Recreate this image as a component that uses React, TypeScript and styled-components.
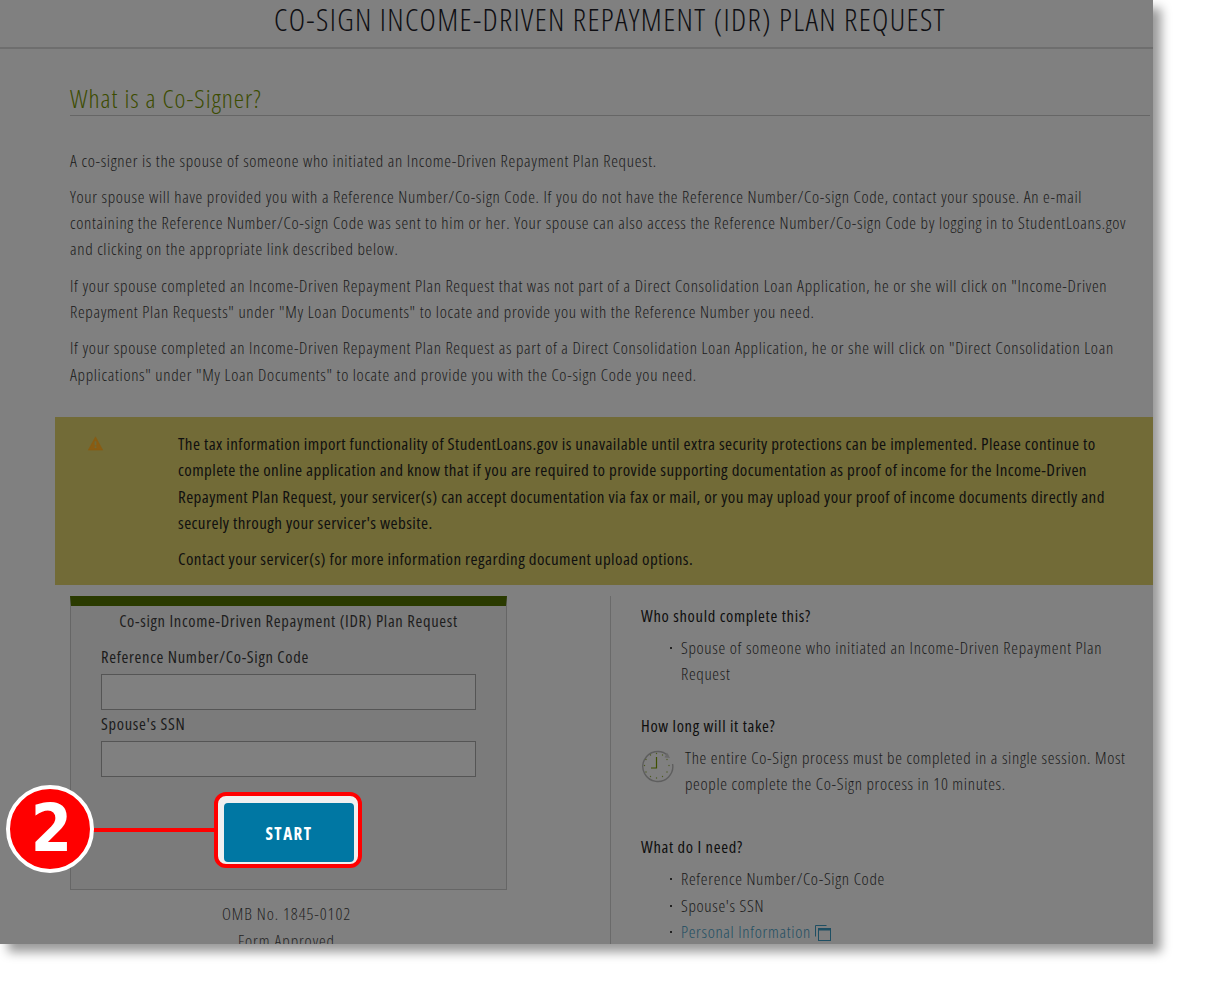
import { createGlobalStyle, styled } from 'styled-components';

const App = () => {
  return (
    <>
      <GlobalStyle />
      <ShotFrame>
        <PageInner>
          <PageHeader>CO-SIGN INCOME-DRIVEN REPAYMENT (IDR) PLAN REQUEST</PageHeader>
          <IntroSection>
            <SectionTitle>What is a Co-Signer?</SectionTitle>
            <IntroText>
              {introParagraphs.map((lines, idx) => (
                <Paragraph key={idx}>
                  {lines.map((line, i) => (
                    <Line key={i}>{line}</Line>
                  ))}
                </Paragraph>
              ))}
            </IntroText>
          </IntroSection>

          <WarningBanner>
            <WarningIcon viewBox="0 0 24 24" aria-hidden="true">
              <path d="M12 1.5 L23.5 22.5 H0.5 Z" fill="#8a5c12" stroke="#8a5c12" strokeWidth="1" strokeLinejoin="round" />
              <rect x="10.6" y="8.5" width="2.8" height="6.5" fill="#6e6a38" />
              <rect x="10.6" y="16.5" width="2.8" height="2.8" fill="#6e6a38" />
            </WarningIcon>
            <WarningText>
              <Paragraph>
                {warningLines.map((line, i) => (
                  <Line key={i}>{line}</Line>
                ))}
              </Paragraph>
              <Paragraph>Contact your servicer(s) for more information regarding document upload options.</Paragraph>
            </WarningText>
          </WarningBanner>

          <Columns>
            <LeftColumn>
              <FormCard>
                <FormTitle>Co-sign Income-Driven Repayment (IDR) Plan Request</FormTitle>
                <FieldLabel>Reference Number/Co-Sign Code</FieldLabel>
                <TextInput />
                <FieldLabel>Spouse's SSN</FieldLabel>
                <TextInput />
                <ButtonRow>
                  <ButtonHighlight>
                    <StartButton>START</StartButton>
                  </ButtonHighlight>
                </ButtonRow>
                <CalloutLine />
                <CalloutBadge>2</CalloutBadge>
              </FormCard>
              <FormMeta>
                <div>OMB No. 1845-0102</div>
                <div>Form Approved</div>
              </FormMeta>
            </LeftColumn>

            <RightColumn>
              <InfoTitle>Who should complete this?</InfoTitle>
              <BulletList>
                <BulletItem>
                  <Line>Spouse of someone who initiated an Income-Driven Repayment Plan</Line>
                  <Line>Request</Line>
                </BulletItem>
              </BulletList>

              <InfoTitle $top={26}>How long will it take?</InfoTitle>
              <ClockRow>
                <ClockIcon viewBox="0 0 34 34" aria-hidden="true">
                  <path d="M27 6.5 A15 15 0 1 0 31.6 15" fill="none" stroke="#5e5e5e" strokeWidth="1.4" />
                  <path d="M26 3.5 L29 9 L23.5 8.6 Z" fill="#6a6a6a" />
                  <path d="M15.5 8 V19 H10" fill="none" stroke="#3f5000" strokeWidth="1.2" />
                  {clockDots.map(([x, y], i) => (
                    <circle key={i} cx={x} cy={y} r="0.7" fill="#4c5a20" />
                  ))}
                </ClockIcon>
                <ClockText>
                  <Line>The entire Co-Sign process must be completed in a single session. Most</Line>
                  <Line>people complete the Co-Sign process in 10 minutes.</Line>
                </ClockText>
              </ClockRow>

              <InfoTitle $top={36.6}>What do I need?</InfoTitle>
              <BulletList $top={6}>
                <BulletItem>Reference Number/Co-Sign Code</BulletItem>
                <BulletItem>Spouse's SSN</BulletItem>
                <BulletItem>
                  <InfoLink>Personal Information</InfoLink>
                  <CopyIcon viewBox="0 0 16 16" aria-hidden="true">
                    <path d="M0.5 11.5 V0.5 H11.5" fill="none" stroke="#1f4f63" strokeWidth="1" />
                    <rect x="3.5" y="3.5" width="12" height="12" fill="none" stroke="#1f4f63" strokeWidth="1" />
                    <rect x="3.5" y="3.5" width="12" height="2" fill="#1f4f63" />
                  </CopyIcon>
                </BulletItem>
              </BulletList>
            </RightColumn>
          </Columns>
        </PageInner>
      </ShotFrame>
    </>
  );
};

export default App;

const introParagraphs = [
  ['A co-signer is the spouse of someone who initiated an Income-Driven Repayment Plan Request.'],
  [
    'Your spouse will have provided you with a Reference Number/Co-sign Code. If you do not have the Reference Number/Co-sign Code, contact your spouse. An e-mail',
    'containing the Reference Number/Co-sign Code was sent to him or her. Your spouse can also access the Reference Number/Co-sign Code by logging in to StudentLoans.gov',
    'and clicking on the appropriate link described below.',
  ],
  [
    'If your spouse completed an Income-Driven Repayment Plan Request that was not part of a Direct Consolidation Loan Application, he or she will click on "Income-Driven',
    'Repayment Plan Requests" under "My Loan Documents" to locate and provide you with the Reference Number you need.',
  ],
  [
    'If your spouse completed an Income-Driven Repayment Plan Request as part of a Direct Consolidation Loan Application, he or she will click on "Direct Consolidation Loan',
    'Applications" under "My Loan Documents" to locate and provide you with the Co-sign Code you need.',
  ],
];

const warningLines = [
  'The tax information import functionality of StudentLoans.gov is unavailable until extra security protections can be implemented. Please continue to',
  'complete the online application and know that if you are required to provide supporting documentation as proof of income for the Income-Driven',
  'Repayment Plan Request, your servicer(s) can accept documentation via fax or mail, or you may upload your proof of income documents directly and',
  "securely through your servicer's website.",
];

const clockDots = [
  [15.5, 4.5], [21.5, 6], [26, 10.5], [28, 16.5], [26, 23], [21.5, 27.5],
  [15.5, 29], [9.5, 27.5], [5, 23], [3.5, 16.5], [5, 10.5], [9.5, 6],
];

const GlobalStyle = createGlobalStyle`
  html, body {
    margin: 0;
    padding: 0;
    min-height: 100vh;
    background: #fff;
  }
  body {
    font-family: "Open Sans", "Liberation Sans", sans-serif;
    font-stretch: 75%;
    font-weight: 300;
    font-size: 17px;
    letter-spacing: 0.68px;
    line-height: 26.3px;
    color: #1a1a1a;
  }
`;

const ShotFrame = styled.div`
  width: 1153px;
  height: 944px;
  overflow: hidden;
  background: #808080;
  box-shadow: 8px 8px 10px rgba(0, 0, 0, 0.4);
`;

const PageInner = styled.div`
  width: 1220px;
`;

const PageHeader = styled.h1`
  margin: 0;
  height: 47px;
  border-bottom: 2px solid #6e6e6e;
  font-size: 31px;
  font-weight: 300;
  letter-spacing: 1.34px;
  line-height: 39px;
  text-align: center;
  color: #0e0e12;
  white-space: nowrap;
`;

const IntroSection = styled.section`
  width: 1080px;
  margin-left: 70px;
`;

const SectionTitle = styled.h2`
  margin: 34px 0 0;
  height: 32px;
  border-bottom: 1px solid #666;
  font-size: 26px;
  font-weight: 300;
  letter-spacing: 1px;
  line-height: 31px;
  color: #3c4c00;
`;

const IntroText = styled.div`
  margin-top: 31.6px;
  display: flex;
  flex-direction: column;
  gap: 10px;
`;

const Paragraph = styled.p`
  margin: 0;
  white-space: nowrap;
`;

const Line = styled.span`
  display: block;
`;

const WarningBanner = styled.div`
  display: flex;
  width: 1098px;
  height: 168px;
  margin: 29.4px 0 0 55px;
  background: #726b37;
  color: #101010;
  font-weight: 400;
  letter-spacing: 0.42px;
`;

const WarningIcon = styled.svg`
  flex: none;
  width: 17px;
  height: 15px;
  margin: 19px 0 0 32px;
`;

const WarningText = styled.div`
  margin: 13.6px 0 0 74px;
  display: flex;
  flex-direction: column;
  gap: 10px;
`;

const Columns = styled.div`
  display: flex;
  margin: 11px 0 0 70px;
`;

const LeftColumn = styled.div`
  flex: none;
  width: 437px;
  text-align: center;
`;

const FormCard = styled.div`
  position: relative;
  box-sizing: border-box;
  height: 294px;
  border: 1px solid #666;
  border-top: 10px solid #2a3a00;
  background: #7b7b7b;
  padding: 2px 30px 0;
  text-align: left;
  font-size: 16.5px;
`;

const FormTitle = styled.div`
  text-align: center;
  color: #1e1e1e;
  font-weight: 400;
  margin-bottom: 9px;
  white-space: nowrap;
`;

const FieldLabel = styled.label`
  display: block;
  color: #1c1c1c;
  font-weight: 400;
`;

const TextInput = styled.input`
  display: block;
  box-sizing: border-box;
  width: 375px;
  height: 36px;
  margin: 4px 0 1px;
  background: #808080;
  border: 1px solid #555;
`;

const ButtonRow = styled.div`
  display: flex;
  justify-content: center;
  margin-top: 15px;
  padding-right: 1px;
`;

const ButtonHighlight = styled.div`
  box-sizing: border-box;
  width: 148px;
  height: 76px;
  padding: 7px 4px 2px 6px;
  background: #f0f0f0;
  border: 4px solid #f00;
  border-radius: 12px;
`;

const StartButton = styled.button`
  display: block;
  width: 100%;
  height: 100%;
  padding: 2px 0 0;
  border: 0;
  border-radius: 4px;
  background: #0077a3;
  color: #fff;
  font-family: inherit;
  font-stretch: inherit;
  font-size: 17px;
  font-weight: 700;
  letter-spacing: 1.5px;
`;

const CalloutLine = styled.div`
  position: absolute;
  left: 22px;
  top: 222px;
  width: 122px;
  height: 4px;
  background: #f00;
`;

const CalloutBadge = styled.div`
  position: absolute;
  left: -65px;
  top: 179px;
  box-sizing: border-box;
  width: 88px;
  height: 88px;
  border: 4px solid #fff;
  border-radius: 50%;
  background: #f00;
  color: #fff;
  font-family: "DejaVu Sans Condensed", "DejaVu Sans", sans-serif;
  font-stretch: normal;
  font-size: 66px;
  font-weight: 700;
  letter-spacing: 0;
  line-height: 80px;
  text-align: center;
  text-indent: 3px;
`;

const FormMeta = styled.div`
  margin-top: 11px;
  padding-right: 4px;
  color: #242424;
  letter-spacing: 0.9px;
`;

const RightColumn = styled.div`
  margin-left: 103px;
  height: 348px;
  width: 536px;
  box-sizing: border-box;
  padding-left: 30px;
  border-left: 1px solid #6a6a6a;
`;

const InfoTitle = styled.div<{ $top?: number }>`
  margin-top: ${(p) => p.$top ?? 7}px;
  color: #0e0e0e;
  font-size: 16.5px;
  font-weight: 400;
`;

const BulletList = styled.ul<{ $top?: number }>`
  margin: ${(p) => p.$top ?? 5}px 0 0;
  padding: 0 0 0 40px;
  list-style: none;
`;

const BulletItem = styled.li`
  position: relative;
  white-space: nowrap;
  &::before {
    content: '';
    position: absolute;
    left: -11px;
    top: 12px;
    width: 2px;
    height: 2px;
    background: #222;
  }
`;

const ClockRow = styled.div`
  display: flex;
  margin-top: 5.4px;
`;

const ClockIcon = styled.svg`
  flex: none;
  width: 34px;
  height: 34px;
  margin-top: 4px;
`;

const ClockText = styled.div`
  margin-left: 10px;
  white-space: nowrap;
`;

const InfoLink = styled.a`
  color: #1f4f63;
`;

const CopyIcon = styled.svg`
  width: 16px;
  height: 16px;
  margin-left: 4px;
  vertical-align: -3px;
`;
